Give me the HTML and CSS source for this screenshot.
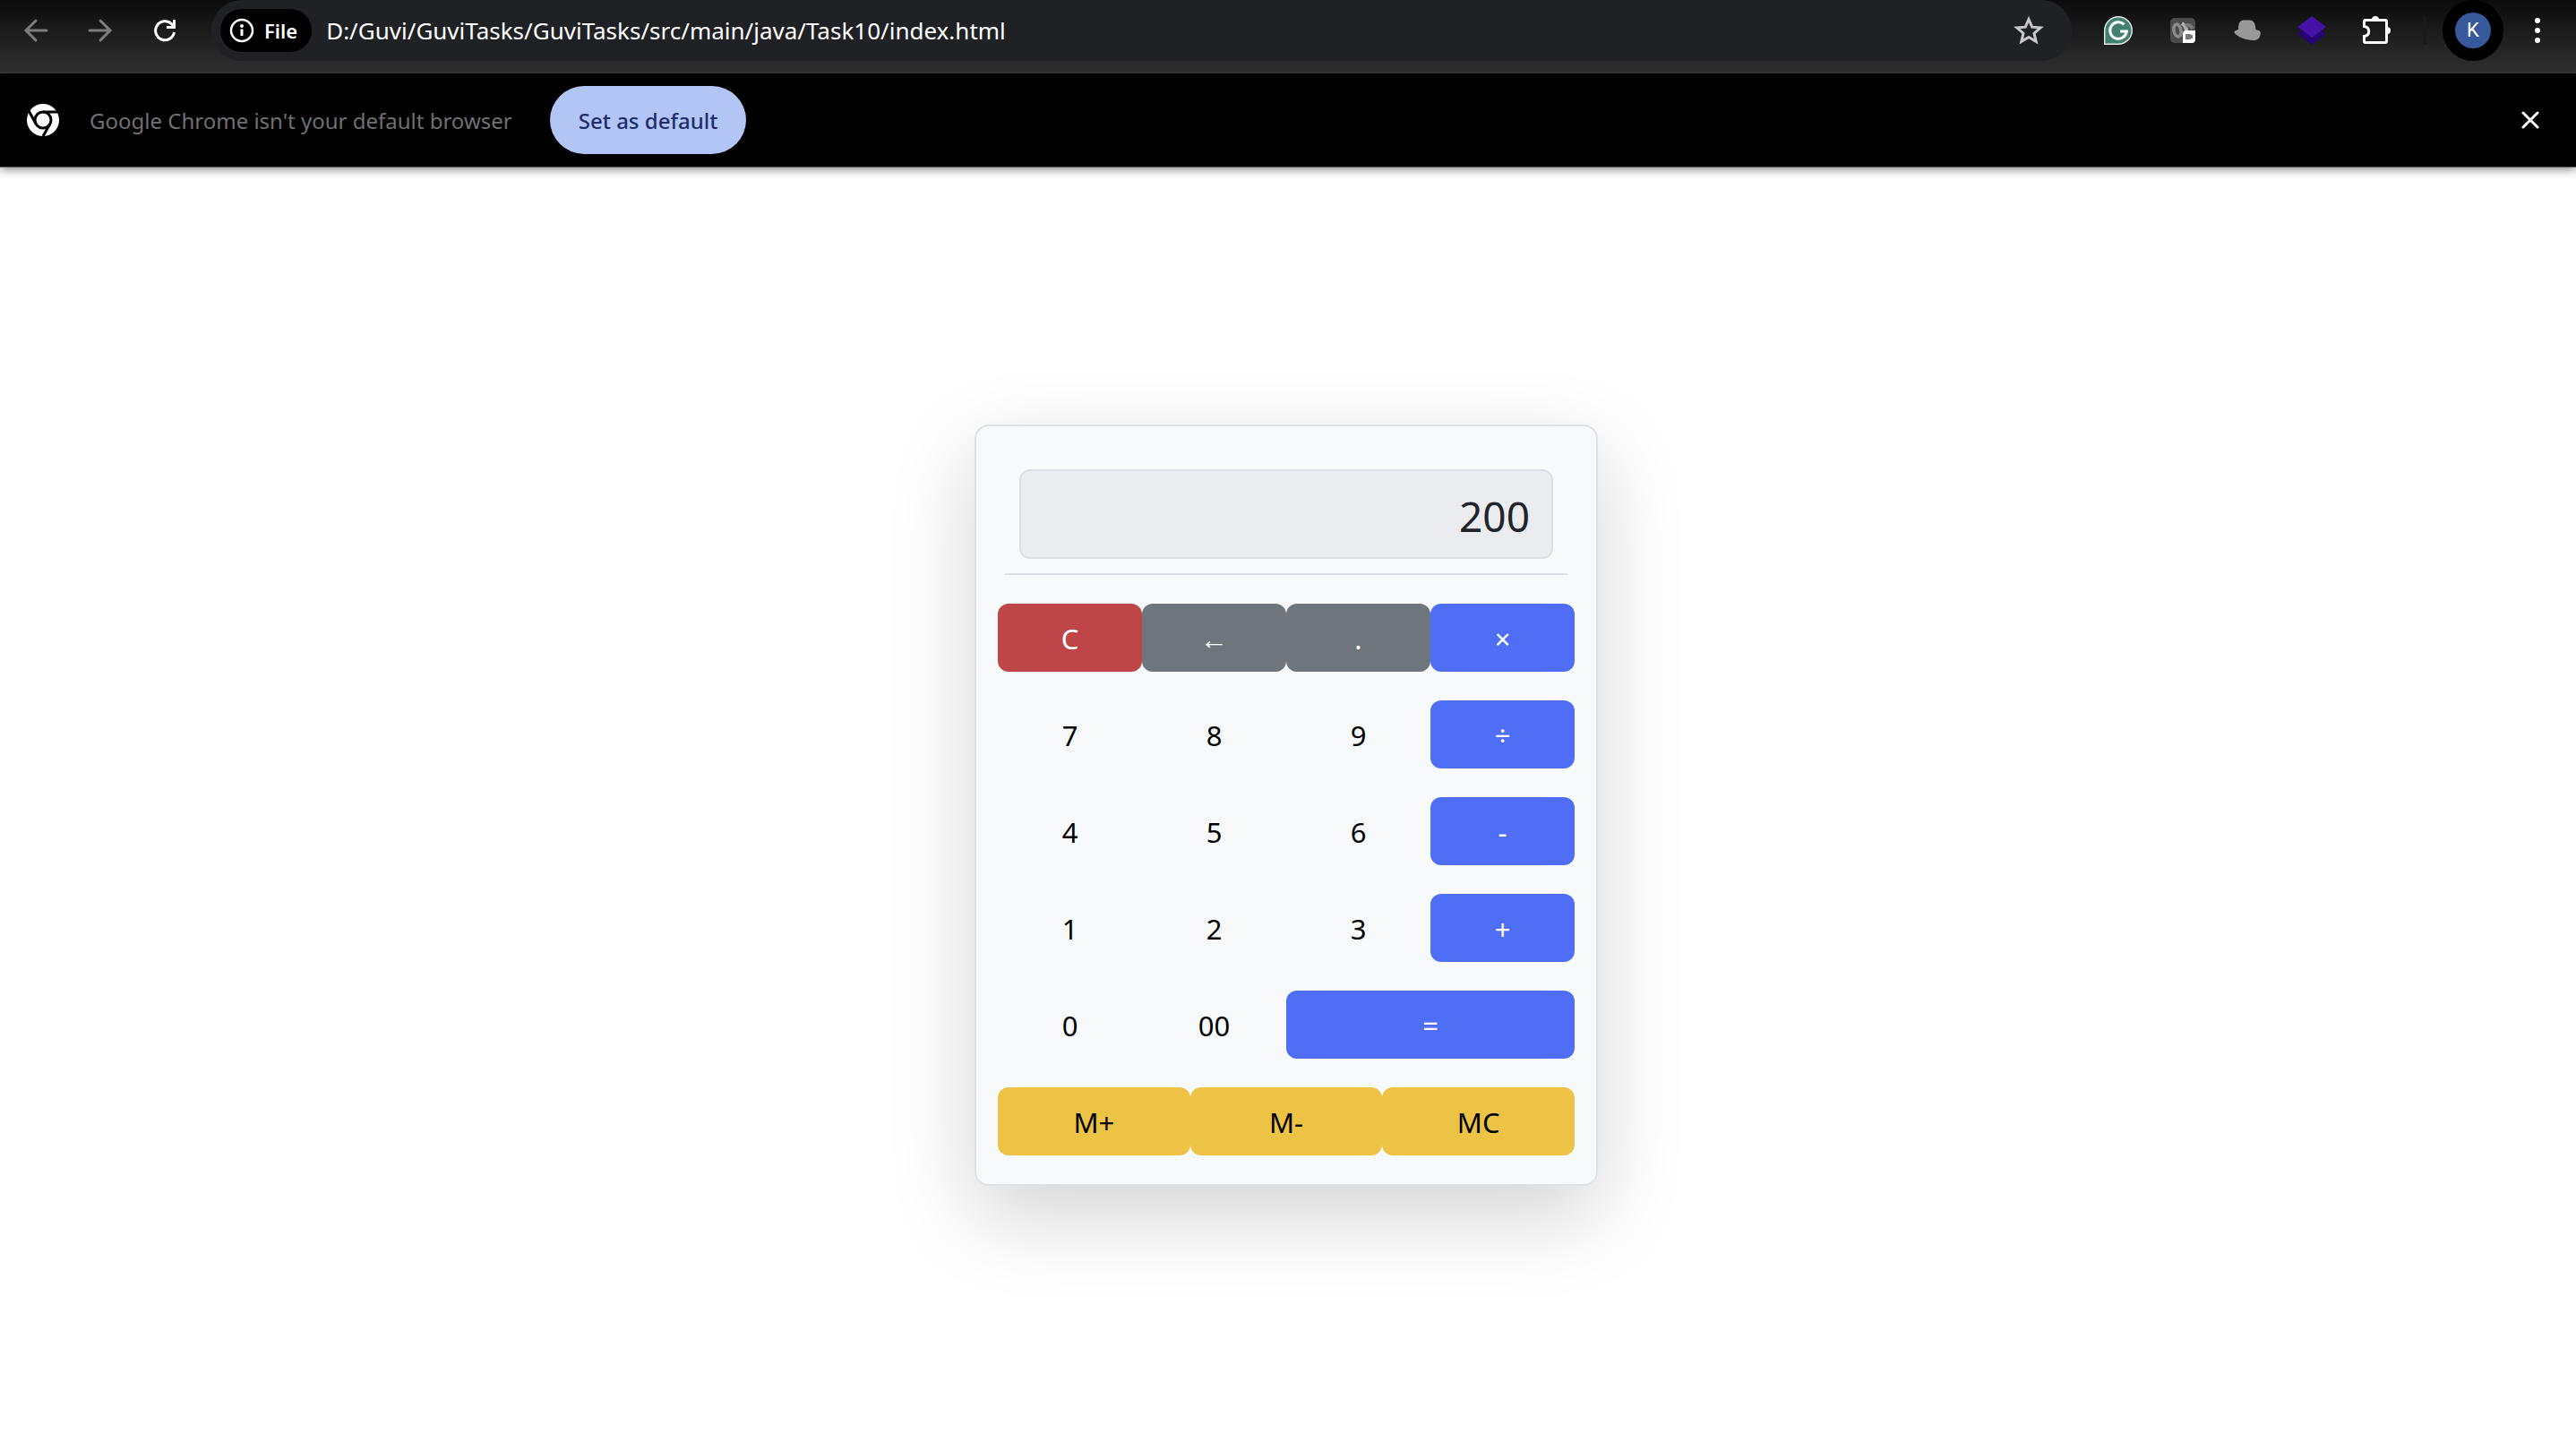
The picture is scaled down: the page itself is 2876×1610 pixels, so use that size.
FILE: index.html
```html
<!DOCTYPE html>
<html lang="en">
<head>
<meta charset="utf-8">
<title>Calculator</title>
<link rel="stylesheet" href="styles.css">
</head>
<body>
<header class="toolbar">
  <nav class="nav" aria-label="Navigation">
    <button class="icon-btn dim" aria-label="Back"><svg width="32" height="32" viewBox="0 0 32 32" class="line"><path d="M28 16H6M16 5L5 16l11 11"/></svg></button>
    <button class="icon-btn dim" aria-label="Forward"><svg width="32" height="32" viewBox="0 0 32 32" class="line"><path d="M4 16h22M16 5l11 11-11 11"/></svg></button>
    <button class="icon-btn" aria-label="Reload"><svg width="32" height="32" viewBox="0 0 32 32" class="line bold"><path d="M26.500 18A10.500 10.500 0 1 1 23.400 8.600L26.500 12M26.500 4v8.500H18"/></svg></button>
  </nav>
  <div class="omnibox">
    <button class="chip"><svg width="28" height="28" viewBox="0 0 28 28"><circle cx="14" cy="14" r="12" fill="none" stroke="#fff" stroke-width="2.500"/><path d="M14 12.500v7.500" stroke="#fff" stroke-width="3"/><circle cx="14" cy="9" r="2" fill="#fff"/></svg>File</button>
    <input class="url" type="text" aria-label="Address" value="D:/Guvi/GuviTasks/GuviTasks/src/main/java/Task10/index.html">
    <button class="star" aria-label="Bookmark"><svg width="36" height="36" viewBox="0 0 36 36"><path d="M18 5.500l3.700 8.700 9.500.8-7.200 6.200 2.200 9.200L18 25.500l-8.200 4.900L12 21.200 4.800 15l9.500-.8z" fill="none" stroke="#c7c7c7" stroke-width="3"/></svg></button>
  </div>
  <div class="extensions">
    <button class="icon-btn" aria-label="Grammar"><svg width="32" height="32" viewBox="0 0 32 32"><path d="M.7 31.300V16A15.300 15.300 0 1 1 16 31.300z" fill="#43806f" stroke="#e6ece9" stroke-width="1.400"/><path d="M22.500 9.300A9.300 9.300 0 1 0 25.300 17H18" fill="none" stroke="#fff" stroke-width="3"/></svg></button>
    <button class="icon-btn" aria-label="Recorder"><svg width="28" height="28" viewBox="0 0 28 28"><rect width="28" height="28" rx="5" fill="#4c4c4c"/><ellipse cx="8" cy="14" rx="4" ry="7" fill="none" stroke="#8c8c8c" stroke-width="3.500" transform="rotate(-12 8 14)"/><path d="M13 6c5 3 6 8 5 14" fill="none" stroke="#b0b0b0" stroke-width="4"/><path d="M17 9q5-3 8 3" fill="none" stroke="#7c7c7c" stroke-width="4"/><path d="M14 28V18q0-4 4-4h10v10q0 4-4 4z" fill="#fff"/><path d="M17 18h6v1.500l2-1v5l-2-1V24h-6z" fill="#777"/></svg></button>
    <button class="icon-btn" aria-label="Hat"><svg width="32" height="32" viewBox="0 0 32 32"><path d="M6 15C6 7 8 4 13 4.500h5C23 4 25 8 25.500 15c5 1 6 3 5 6-1 4-3 6-8 6C14 27 5 23 1.500 18.500 1 16 4 16 6 15z" fill="#999"/></svg></button>
    <button class="icon-btn" aria-label="Layers"><svg width="32" height="32" viewBox="0 0 32 32"><path d="M0 20L16 8l16 12-16 12z" fill="#280472"/><path d="M0 12L16 0l16 12-16 12z" fill="#4611a7"/></svg></button>
    <button class="icon-btn" aria-label="Extensions"><svg width="36" height="36" viewBox="0 0 36 36"><path d="M4.500 8q0-1.500 1.500-1.500h22q1.500 0 1.500 1.500v22q0 1.500-1.500 1.500H6q-1.500 0-1.500-1.500v-5.500c7-1 7-10 0-11z" fill="none" stroke="#fff" stroke-width="3"/><path d="M13 6a4 4 0 0 1 8 0zM30 14a4 4 0 0 1 0 8z" fill="#fff"/></svg></button>
  </div>
  <span class="divider"></span>
  <button class="profile" aria-label="Profile"><span class="avatar">K</span></button>
  <button class="icon-btn menu" aria-label="Menu"><svg width="32" height="32" viewBox="0 0 32 32" fill="#fff"><circle cx="16" cy="5" r="3"/><circle cx="16" cy="16" r="3"/><circle cx="16" cy="27" r="3"/></svg></button>
</header>
<aside class="infobar">
  <svg class="logo" width="36" height="36" viewBox="0 0 36 36"><circle cx="18" cy="18" r="18" fill="#fff"/><circle cx="18" cy="18" r="9" fill="none" stroke="#000" stroke-width="3"/><path d="M18 9h17M10.200 22.500L2 7.500M25.800 22.500L18 36" stroke="#000" stroke-width="3"/></svg>
  <p class="notice">Google Chrome isn't your default browser</p>
  <button class="default-btn">Set as default</button>
  <button class="close" aria-label="Close"><svg width="20" height="20" viewBox="0 0 20 20" class="line"><path d="M2 2l16 16M18 2L2 18"/></svg></button>
</aside>
<main class="page">
  <form class="calculator">
    <div class="screen"><input class="display" type="text" aria-label="Result" value="200" readonly></div>
    <div class="keys">
      <button type="button" class="key red">C</button>
      <button type="button" class="key gray">←</button>
      <button type="button" class="key gray">.</button>
      <button type="button" class="key blue">×</button>
      <button type="button" class="key">7</button>
      <button type="button" class="key">8</button>
      <button type="button" class="key">9</button>
      <button type="button" class="key blue">÷</button>
      <button type="button" class="key">4</button>
      <button type="button" class="key">5</button>
      <button type="button" class="key">6</button>
      <button type="button" class="key blue">-</button>
      <button type="button" class="key">1</button>
      <button type="button" class="key">2</button>
      <button type="button" class="key">3</button>
      <button type="button" class="key blue">+</button>
      <button type="button" class="key">0</button>
      <button type="button" class="key">00</button>
      <button type="button" class="key blue wide">=</button>
      <button type="button" class="key third yellow">M+</button>
      <button type="button" class="key third yellow">M-</button>
      <button type="button" class="key third yellow">MC</button>
    </div>
  </form>
</main>
</body>
</html>
```
FILE: styles.css
```css
* { box-sizing: border-box; }
body {
  margin: 0;
  min-height: 100vh;
  display: flex;
  flex-direction: column;
  background: #fff;
  color: #212529;
  font-family: "Noto Sans", "Open Sans", sans-serif;
}
button, input { font: inherit; color: inherit; border: 0; padding: 0; background: none; }
svg { display: block; flex: none; }
.line { fill: none; stroke: currentColor; stroke-width: 3; stroke-linecap: round; }
.bold { stroke-linecap: butt; }

.toolbar {
  display: flex;
  align-items: flex-start;
  height: 82px;
  padding: 0 7px 0 4px;
  color: #fff;
  background: linear-gradient(#0b0b0b, #303030);
  border-bottom: 2px solid #3c3c3c;
}
.nav, .extensions { display: flex; }
.icon-btn { width: 72px; height: 68px; display: grid; place-items: center; }
.dim { color: #7d7d7d; }
.omnibox {
  flex: 1;
  display: flex;
  align-items: center;
  height: 68px;
  margin: 0 16px;
  padding: 0 30px 0 10px;
  border-radius: 34px;
  background: #202125;
}
.chip {
  display: flex;
  align-items: center;
  gap: 11px;
  height: 48px;
  padding: 0 16px 0 10px;
  border-radius: 24px;
  background: #000;
  font-size: 22px;
  font-weight: 600;
}
.url { flex: 1; margin-left: 16px; font-size: 26px; height: 48px; }
.divider { width: 4px; height: 32px; margin: 18px 18px 0 16px; border-radius: 2px; background: #1a1a1a; }
.profile { width: 68px; height: 68px; margin-right: 2px; display: grid; place-items: center; border-radius: 50%; background: #000; }
.avatar {
  width: 40px;
  height: 40px;
  border-radius: 50%;
  background: #37589b;
  font: 22px/40px Roboto, sans-serif;
}

.infobar {
  display: flex;
  align-items: center;
  height: 105px;
  padding: 0 41px 0 30px;
  background: #000;
  border-bottom: 1px solid #555;
  box-shadow: 0 2px 10px rgba(0, 0, 0, .5);
}
.notice { margin: 0 42px 0 34px; font-size: 24px; color: #6f7072; }
.default-btn {
  height: 76px;
  padding: 0 32px;
  border-radius: 38px;
  background: #b3c5f5;
  color: #1f2d6b;
  font-size: 24px;
  font-weight: 500;
}
.close { margin-left: auto; color: #fff; }

.page { flex: 1; display: flex; justify-content: center; align-items: center; padding-right: 4px; }
.calculator {
  width: 696px;
  padding: 48px 24px 32px;
  border: 2px solid #dee2e6;
  border-radius: 16px;
  background: #f8f9fb;
  box-shadow: 0 32px 96px rgba(0, 0, 0, .175);
}
.screen {
  margin: 0 8px 32px;
  padding: 0 16px 16px;
  border-bottom: 2px solid #dee0e8;
}
.display {
  display: block;
  width: 100%;
  height: 100px;
  padding: 4px 24px 0;
  border: 2px solid #dee0e6;
  border-radius: 12px;
  background: #ebecf0;
  font-size: 46px;
  text-align: right;
}
.keys { display: grid; grid-template-columns: repeat(12, 1fr); row-gap: 32px; }
.key { grid-column: span 3; height: 76px; padding-top: 3px; border-radius: 12px; font-size: 31px; color: #000; }
.wide { grid-column: span 6; }
.third { grid-column: span 4; }
.red, .gray, .blue { color: #fff; }
.red { background: #bf4648; }
.gray { background: #6e757c; }
.blue { background: #506df5; }
.yellow { background: #edc345; }
```
